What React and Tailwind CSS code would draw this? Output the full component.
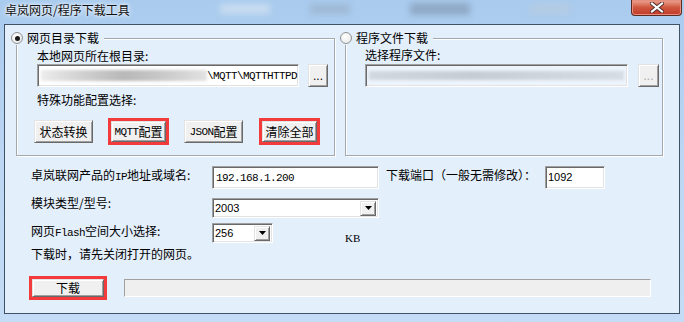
const cjk = "font-['Noto_Sans_CJK_SC',sans-serif]";
const mono = "font-['Liberation_Mono','Noto_Sans_CJK_SC',monospace] text-[11px] tracking-[-0.6px]";
const raised =
  "bg-[#f0f0f0] border border-t-[#e3e3e3] border-l-[#e3e3e3] border-r-[#696969] border-b-[#696969] shadow-[inset_1px_1px_0_#ffffff,inset_-1px_-1px_0_#a0a0a0]";
const sunken =
  "border border-t-[#a0a0a0] border-l-[#a0a0a0] border-r-white border-b-white shadow-[inset_1px_1px_0_#696969,inset_-1px_-1px_0_#e3e3e3]";
const groupBox =
  "relative h-[118px] border border-[#a4a9ae] shadow-[1px_1px_0_#ffffff,inset_1px_1px_0_#ffffff]";

function Radio({ checked }) {
  return (
    <span className="w-[12px] h-[12px] rounded-full border border-[#8f9294] bg-[radial-gradient(circle_at_40%_35%,#ffffff,#e4e4e4)] flex items-center justify-center">
      {checked && <span className="w-[5px] h-[5px] rounded-full bg-[#1a1a1a]" />}
    </span>
  );
}

function Btn({ children, w, h = 23, className = "" }) {
  return (
    <div
      className={`${raised} flex items-center justify-center leading-[14px] text-[12px] ${className}`}
      style={{ width: w, height: h }}
    >
      {children}
    </div>
  );
}

function RedBox({ children, w, h }) {
  return (
    <div
      className="border-[3px] border-[#f43b3b] flex items-stretch"
      style={{ width: w, height: h }}
    >
      {children}
    </div>
  );
}

function Combo({ value, w }) {
  return (
    <div className={`${sunken} bg-white h-[20px] flex items-center justify-between pl-[2px] pr-[2px]`} style={{ width: w }}>
      <span className="font-['Liberation_Sans',sans-serif] text-[11px] leading-[14px]">{value}</span>
      <div className={`${raised} w-[16px] h-[15px] flex items-center justify-center`}>
        <svg width="7" height="4" viewBox="0 0 7 4">
          <path d="M0 0h7L3.5 4z" fill="#000" />
        </svg>
      </div>
    </div>
  );
}

export default function App() {
  return (
    <div className={`w-[684px] h-[322px] bg-gradient-to-b from-[#a9cbee] via-[#bcd6f3] to-[#c4dcf5] text-black ${cjk} overflow-hidden flex flex-col`}>
      {/* title bar */}
      <div className="h-[24px] flex items-start">
        <span className="ml-[5px] mt-[3px] text-[12px] leading-[14px] text-[#111] [text-shadow:0_0_6px_#ffffff,0_0_3px_#ffffff]">
          卓岚网页/程序下载工具
        </span>
        <span className="ml-[90px] mt-[4px] w-[50px] h-[10px] bg-[#c8dcf0] blur-[3px]" />
        <span className="ml-[40px] mt-[4px] w-[40px] h-[10px] bg-[#9fb9d6] blur-[3px]" />
        <span className="ml-[60px] mt-[3px] w-[60px] h-[12px] bg-[#8fa9c6] blur-[3px]" />
        <span className="ml-[60px] mt-[4px] w-[40px] h-[10px] bg-[#b4cbe3] blur-[3px]" />
        <div className="ml-auto mr-[2px] w-[51px] h-[16px] rounded-b-[4px] border border-t-0 border-[#5c2a22] bg-gradient-to-b from-[#e9a596] via-[#d0553d] to-[#c0392a] shadow-[inset_0_0_0_1px_#e88e7c] flex items-center justify-center">
          <svg width="14" height="11" viewBox="0 0 14 11">
            <path d="M2 1.5l10 8M12 1.5l-10 8" stroke="#4a2a26" strokeWidth="4" strokeLinecap="square" />
            <path d="M2 1.5l10 8M12 1.5l-10 8" stroke="#ffffff" strokeWidth="2.2" strokeLinecap="square" />
          </svg>
        </div>
      </div>

      {/* client area */}
      <div className="ml-[4px] w-[676px] h-[290px] border border-[#3f5266] bg-[#e4effc] text-[12px] leading-[14px] flex flex-col">
        {/* groups */}
        <div className="flex gap-[10px] pl-[11px] pt-[13px]">
          <div className={`${groupBox} w-[319px]`}>
            <div className="absolute top-[-8px] left-[-6px] flex items-center gap-[4px] bg-[#e4effc] pr-[5px] h-[14px]">
              <Radio checked />
              <span>网页目录下载</span>
            </div>
            <div className="pl-[20px] pt-[10px]">本地网页所在根目录:</div>
            <div className="flex mt-[1px] pl-[20px] gap-[9px]">
              <div className={`${sunken} bg-white w-[262px] h-[23px] flex items-center pl-[3px] overflow-hidden`}>
                <span className="w-[166px] h-[11px] bg-[linear-gradient(90deg,#ececec,#d0d0d0_25%,#b8b8b8_50%,#c6c6c6_70%,#e2e2e2)] blur-[1.5px]" />
                <span className={mono}>\MQTT\MQTTHTTPD</span>
              </div>
              <Btn w={20} h={23} className="font-['Liberation_Sans',sans-serif]">...</Btn>
            </div>
            <div className="pl-[20px] mt-[6px]">特殊功能配置选择:</div>
            <div className="flex items-center pl-[17px] mt-[11px] h-[27px]">
              <Btn w={59}>状态转换</Btn>
              <div className="ml-[15px]">
                <RedBox w={61} h={27}>
                  <Btn w={55} h={21}>
                    <span className={mono}>MQTT</span>配置
                  </Btn>
                </RedBox>
              </div>
              <div className="ml-[15px]">
                <Btn w={59}>
                  <span className={mono}>JSON</span>配置
                </Btn>
              </div>
              <div className="ml-[16px]">
                <RedBox w={61} h={27}>
                  <Btn w={55} h={21}>清除全部</Btn>
                </RedBox>
              </div>
            </div>
          </div>

          <div className={`${groupBox} w-[318px]`}>
            <div className="absolute top-[-8px] left-[-6px] flex items-center gap-[4px] bg-[#e4effc] pr-[5px] h-[14px]">
              <Radio />
              <span>程序文件下载</span>
            </div>
            <div className="pl-[19px] pt-[9px]">选择程序文件:</div>
            <div className="flex mt-[2px] pl-[19px] gap-[10px]">
              <div className={`${sunken} bg-[#eef4fc] w-[263px] h-[23px] flex items-center px-[3px] overflow-hidden`}>
                <span className="w-full h-[9px] bg-[linear-gradient(90deg,#d2d8e0,#c6ccd4_40%,#cfd5dd_70%,#d6dce4)] blur-[1.5px]" />
              </div>
              <Btn w={21} h={23} className="text-[#a8a8a8] font-['Liberation_Sans',sans-serif]">...</Btn>
            </div>
          </div>
        </div>

        {/* form */}
        <div className="flex items-start pl-[26px] mt-[10px] h-[23px]">
          <span className="w-[181px] mt-[2px]">
            卓岚联网产品的<span className={mono}>IP</span>地址或域名:
          </span>
          <div className={`${sunken} bg-white w-[167px] h-[23px] flex items-center pl-[3px]`}>
            <span className={mono}>192.168.1.200</span>
          </div>
          <span className="ml-[7px] w-[159px] mt-[2px]">下载端口（一般无需修改）：</span>
          <div className={`${sunken} bg-white w-[60px] h-[23px] flex items-start pt-[3px] pl-[2px]`}>
            <span className="font-['Liberation_Sans',sans-serif] text-[11px] leading-[14px]">1092</span>
          </div>
        </div>

        <div className="flex items-start pl-[26px] mt-[7px] h-[22px]">
          <span className="w-[181px]">模块类型/型号:</span>
          <div className="mt-[2px]">
            <Combo value="2003" w={167} />
          </div>
        </div>

        <div className="flex items-start pl-[26px] mt-[5px] h-[20px]">
          <span className="w-[181px] mt-[1px]">
            网页<span className={mono}>Flash</span>空间大小选择:
          </span>
          <Combo value="256" w={61} />
          <span className="ml-[72px] mt-[8px] font-['Liberation_Serif',serif] text-[11px]">KB</span>
        </div>

        <div className="pl-[26px] mt-[4px]">下载时，请先关闭打开的网页。</div>

        <div className="flex items-start pl-[24px] mt-[15px]">
          <RedBox w={78} h={24}>
            <Btn w={72} h={18}>下载</Btn>
          </RedBox>
          <div className="ml-[17px] mt-[3px] w-[527px] h-[18px] bg-[#efefef] border border-t-[#a0a0a0] border-l-[#a0a0a0] border-r-white border-b-white" />
        </div>
      </div>
    </div>
  );
}
